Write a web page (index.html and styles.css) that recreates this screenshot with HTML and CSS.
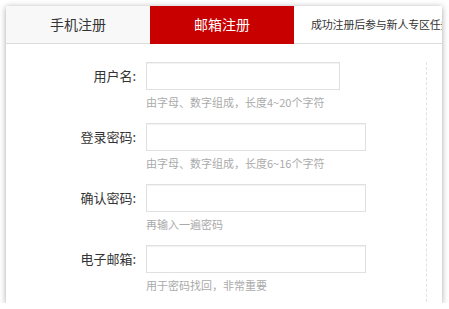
FILE: index.html
```html
<!DOCTYPE html>
<html lang="zh-CN">
<head>
    <meta charset="UTF-8">
    <title>注册</title>
    <link rel="stylesheet" href="styles.css">
</head>
<body>
    <div class="reg-box">
        <!-- 标签页 -->
        <div class="reg-tabs">
            <div class="tab">手机注册</div>
            <div class="tab active">邮箱注册</div>
            <div class="tab-tip">成功注册后参与新人专区任务</div>
        </div>

        <div class="reg-body">
            <div class="reg-form">
                <div class="row">
                    <label class="label">用户名:</label>
                    <div class="field">
                        <input type="text" class="ipt ipt-short">
                        <p class="hint">由字母、数字组成，长度4~20个字符</p>
                    </div>
                </div>
                <div class="row">
                    <label class="label">登录密码:</label>
                    <div class="field">
                        <input type="password" class="ipt">
                        <p class="hint">由字母、数字组成，长度6~16个字符</p>
                    </div>
                </div>
                <div class="row">
                    <label class="label">确认密码:</label>
                    <div class="field">
                        <input type="password" class="ipt">
                        <p class="hint">再输入一遍密码</p>
                    </div>
                </div>
                <div class="row">
                    <label class="label">电子邮箱:</label>
                    <div class="field">
                        <input type="text" class="ipt">
                        <p class="hint">用于密码找回，非常重要</p>
                    </div>
                </div>
            </div>
            <div class="reg-side"></div>
        </div>
    </div>
</body>
</html>
```

FILE: styles.css
```css
html, body {
    margin: 0;
    padding: 0;
    background: #fff;
    font-family: "Noto Sans CJK SC", "Liberation Sans", sans-serif;
    color: #333;
}
.reg-box {
    margin: 6px 0 0 6px;
    width: 436px;
    height: 297px;
    background: #fff;
    overflow: hidden;
    box-shadow: 0 1px 6px rgba(0, 0, 0, 0.35);
}
.reg-tabs {
    display: flex;
    height: 37px;
    border-bottom: 1px solid #dcdcdc;
}
.tab {
    flex: none;
    width: 144px;
    line-height: 37px;
    text-align: center;
    font-size: 14px;
    background: #f8f8f8;
    color: #333;
}
.tab.active {
    background: #c80000;
    color: #fff;
    height: 38px;
}
.tab-tip {
    flex: none;
    padding-left: 17px;
    line-height: 37px;
    font-size: 11px;
    letter-spacing: -0.2px;
    white-space: nowrap;
    color: #333;
}
.reg-body {
    display: flex;
    padding-top: 18px;
}
.reg-form {
    width: 420px;
}
.reg-side {
    flex: 1;
    border-left: 1px dashed #e2e2e2;
    height: 260px;
}
.row {
    display: flex;
    margin-bottom: 13px;
}
.label {
    width: 130px;
    margin-right: 10px;
    text-align: right;
    font-size: 13px;
    line-height: 28px;
    color: #333;
}
.field {
    display: flex;
    flex-direction: column;
}
.ipt {
    box-sizing: border-box;
    width: 220px;
    height: 28px;
    margin: 0;
    border: 1px solid #e0e0e0;
    box-shadow: inset 0 1px 1px #f2f2f2;
    background: #fff;
    outline: none;
}
.ipt-short {
    width: 194px;
}
.hint {
    margin: 4px 0 0;
    font-size: 11px;
    line-height: 16px;
    color: #aaa;
}
```
